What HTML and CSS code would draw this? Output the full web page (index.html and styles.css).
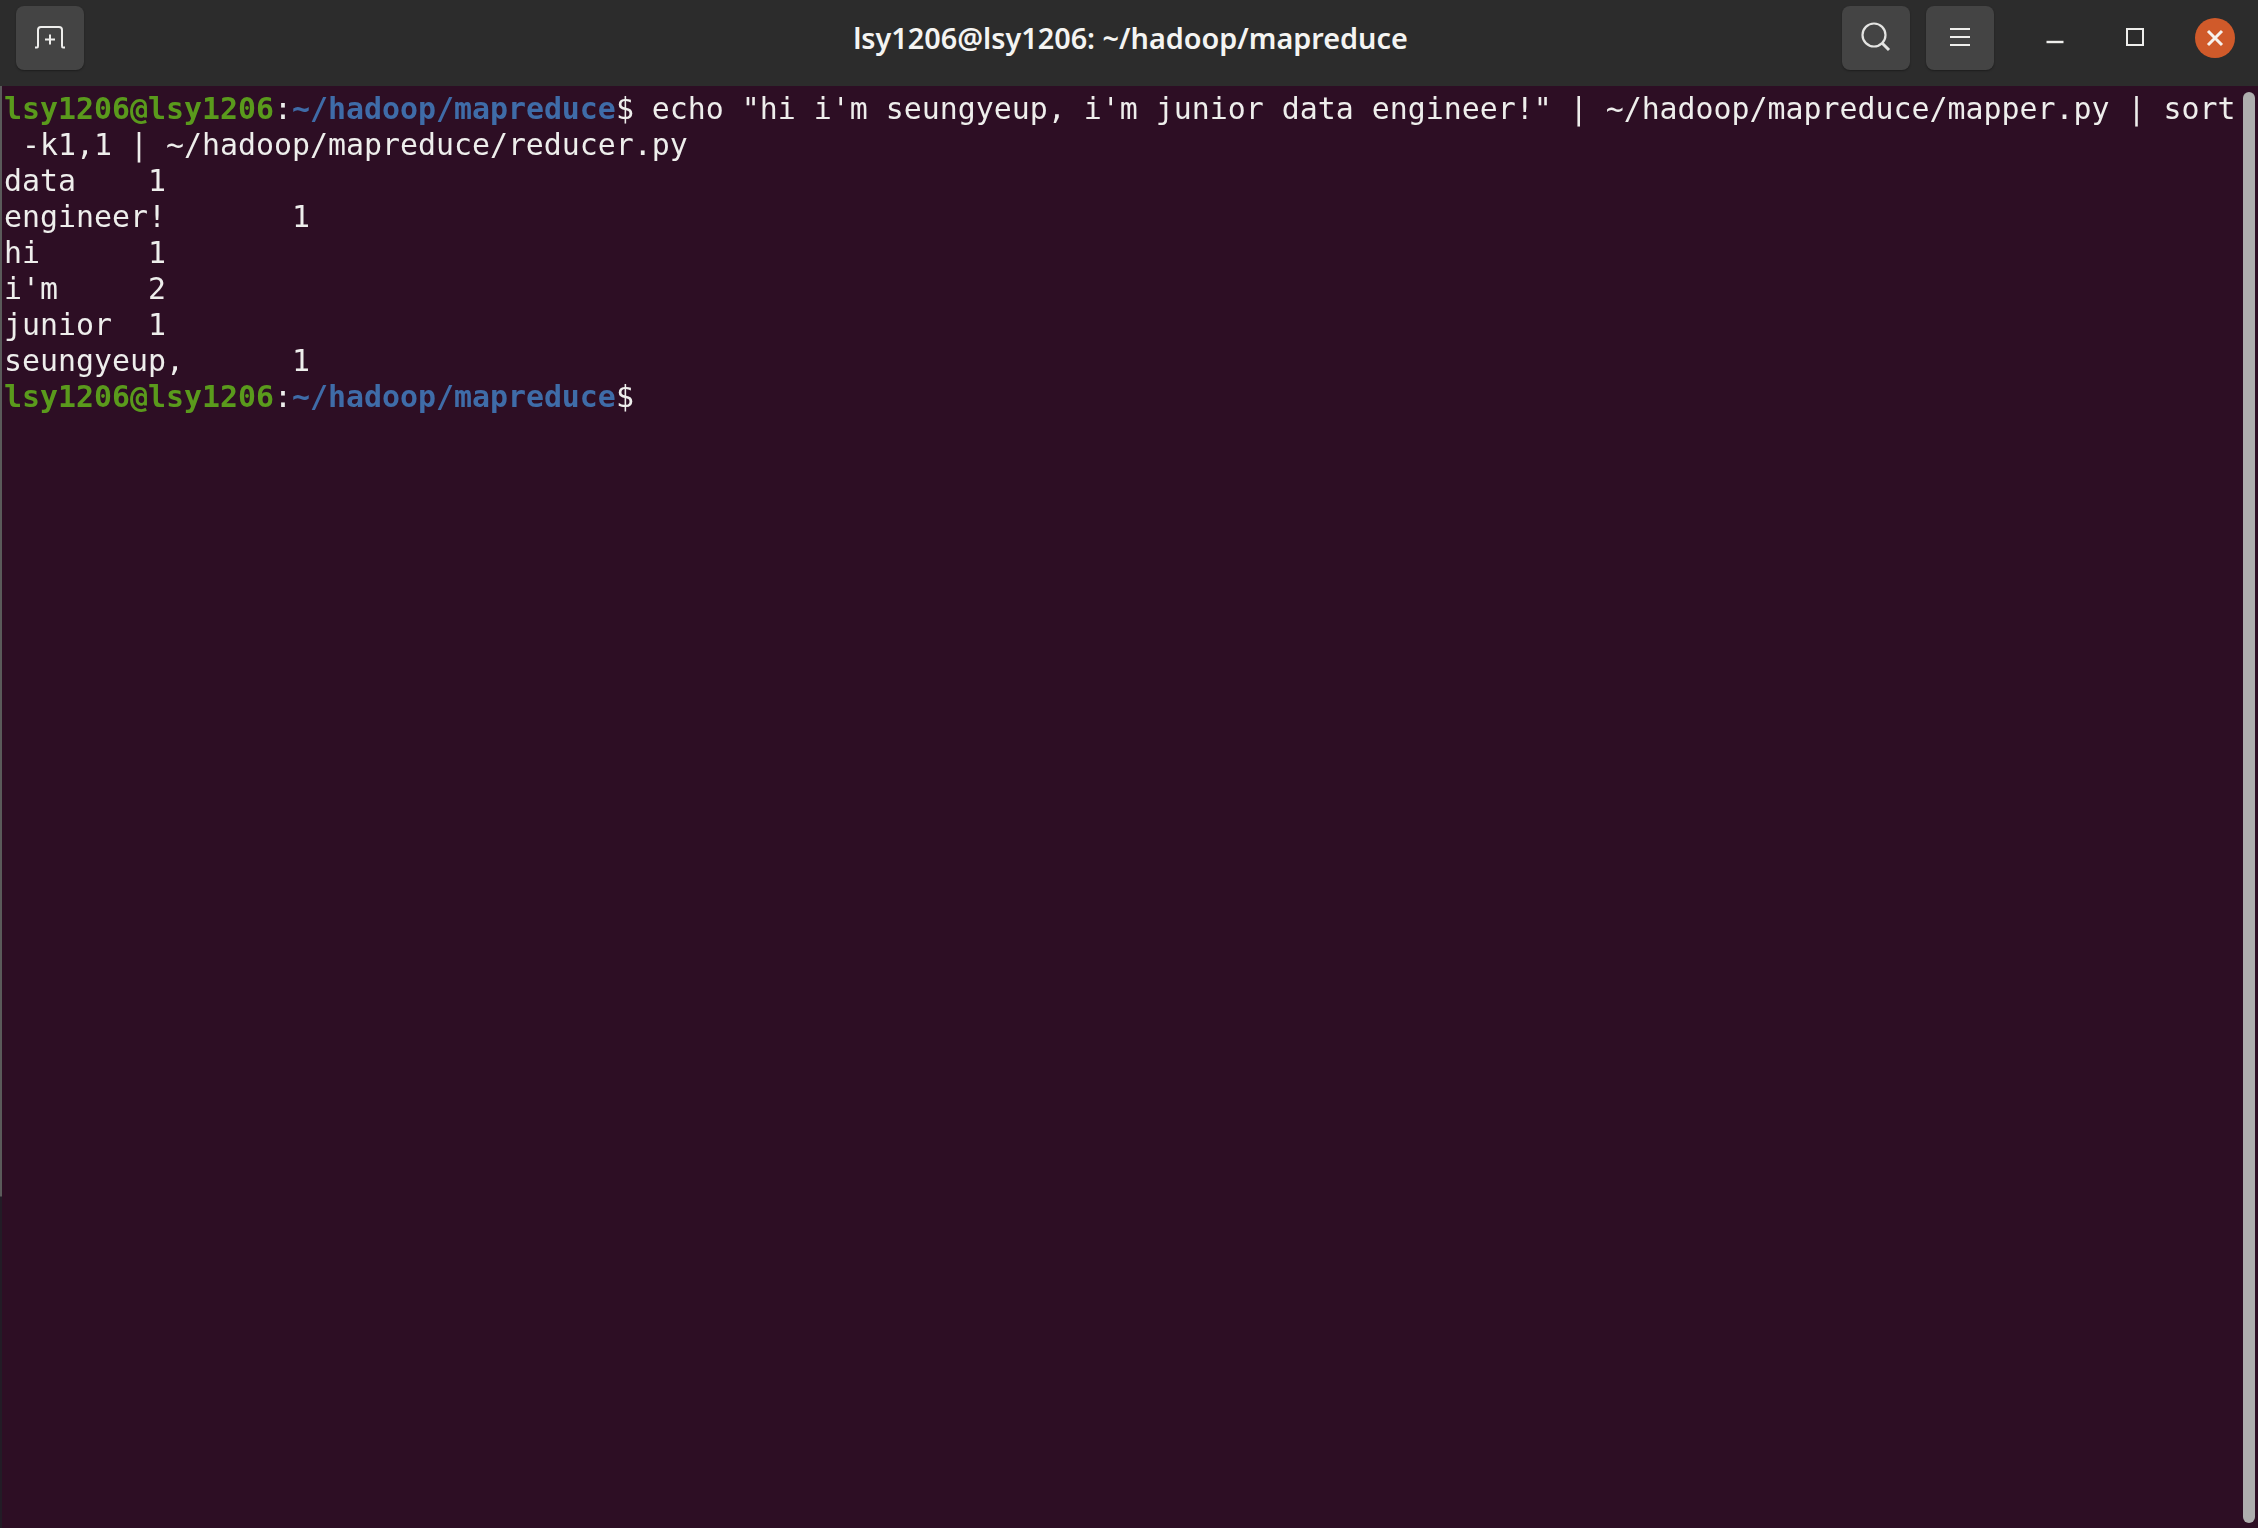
FILE: index.html
```html
<!DOCTYPE html>
<html lang="en">
<head>
<meta charset="utf-8">
<title>lsy1206@lsy1206: ~/hadoop/mapreduce</title>
<link rel="stylesheet" href="styles.css">
</head>
<body>
<div class="window">
  <header class="titlebar">
    <div class="side side-left">
      <button class="tool-btn" aria-label="New tab">
        <svg width="32" height="24" viewBox="0 0 32 24" fill="none" stroke="#eeeeec" stroke-width="2">
          <path d="M1 22.5H3Q4 22.500 4 21V5Q4 2 7 2H25Q28 2 28 5V21Q28 22.500 29 22.500H31"/>
          <path d="M11 14.500H21M16 9.500V19.500"/>
        </svg>
      </button>
    </div>
    <div class="title">lsy1206@lsy1206: ~/hadoop/mapreduce</div>
    <div class="side side-right">
      <button class="tool-btn" aria-label="Search">
        <svg width="32" height="32" viewBox="0 0 32 32" fill="none" stroke="#e4e4e2" stroke-width="2.200">
          <circle cx="14" cy="14" r="11.500"/>
          <path d="M22.500 22.500L29 29" stroke-width="3"/>
        </svg>
      </button>
      <button class="tool-btn" aria-label="Menu">
        <svg width="22" height="20" viewBox="0 0 22 20" fill="none" stroke="#eeeeec" stroke-width="2">
          <path d="M1 2H21M1 10H21M1 18H21"/>
        </svg>
      </button>
      <div class="win-controls">
        <button class="win-btn" aria-label="Minimize">
          <svg width="18" height="18" viewBox="0 0 18 18" fill="none" stroke="#eeeeec" stroke-width="2.400">
            <path d="M0.500 14H17.500"/>
          </svg>
        </button>
        <button class="win-btn" aria-label="Maximize">
          <svg width="18" height="18" viewBox="0 0 18 18" fill="none" stroke="#eeeeec" stroke-width="2">
            <rect x="1" y="1" width="16" height="16"/>
          </svg>
        </button>
        <button class="win-btn" aria-label="Close">
          <span class="close-dot">
            <svg width="18" height="18" viewBox="0 0 18 18" fill="none" stroke="#f6f1ec" stroke-width="3">
              <path d="M2 2L16 16M16 2L2 16"/>
            </svg>
          </span>
        </button>
      </div>
    </div>
  </header>
  <main class="terminal">
    <div class="edge"></div>
    <pre class="output"><span class="user">lsy1206@lsy1206</span>:<span class="path">~/hadoop/mapreduce</span>$ echo "hi i'm seungyeup, i'm junior data engineer!" | ~/hadoop/mapreduce/mapper.py | sort
 -k1,1 | ~/hadoop/mapreduce/reducer.py
data	1
engineer!	1
hi	1
i'm	2
junior	1
seungyeup,	1
<span class="user">lsy1206@lsy1206</span>:<span class="path">~/hadoop/mapreduce</span>$</pre>
    <div class="scrollbar"></div>
  </main>
</div>
</body>
</html>
```
FILE: styles.css
```css
* { box-sizing: border-box; }
html, body { margin: 0; height: 100%; }
body { background: #2d0e24; overflow: hidden; }
.window { display: flex; flex-direction: column; height: 1528px; }

.titlebar {
  flex: 0 0 86px;
  display: flex;
  align-items: flex-start;
  padding: 6px 3px 0 16px;
  background: #2c2c2c;
}
.side { flex: 1 1 0; display: flex; gap: 16px; }
.side-right { justify-content: flex-end; }
.tool-btn {
  flex: 0 0 68px;
  height: 64px;
  display: flex;
  align-items: center;
  justify-content: center;
  padding: 0;
  border: 0;
  border-radius: 8px;
  background: #444444;
  box-shadow: 0 1px 2px rgba(0,0,0,.35);
}
.tool-btn svg { margin-top: -2px; }
.title {
  flex: 0 0 auto;
  margin-left: -10px;
  line-height: 64px;
  font-family: "Noto Sans", sans-serif;
  font-size: 28.800px;
  font-weight: 600;
  color: #f4f4f2;
  white-space: nowrap;
}
.win-controls { display: flex; margin-left: 5px; }
.win-btn {
  width: 80px;
  height: 64px;
  display: flex;
  align-items: center;
  justify-content: center;
  padding: 0;
  border: 0;
  background: none;
}
.win-btn svg { margin-top: -2px; }
.close-dot {
  width: 40px;
  height: 40px;
  display: flex;
  align-items: center;
  justify-content: center;
  border-radius: 50%;
  background: #d05a2a;
}
.close-dot svg { margin-top: 0; }

.terminal {
  flex: 1;
  position: relative;
  display: flex;
  justify-content: space-between;
  min-height: 0;
  background: #2d0e24;
}
.edge {
  position: absolute;
  left: 0;
  top: 0;
  bottom: 0;
  width: 2px;
  background: linear-gradient(#5a5a5a 0, #5a5a5a 1110px, #221c26 1111px);
}
.output {
  margin: 0;
  padding: 5px 0 0 4px;
  font-family: "DejaVu Sans Mono", monospace;
  font-size: 29.900px;
  line-height: 36px;
  color: #eeeeec;
  tab-size: 8;
  white-space: pre;
  filter: blur(0.4px);
}
.user { color: #5a9a1c; font-weight: 700; }
.path { color: #3f6ca8; font-weight: 700; }
.scrollbar {
  flex: 0 0 12px;
  margin: 6px 3px 5px 0;
  border-radius: 6px;
  background: #aeaeae;
}
```
